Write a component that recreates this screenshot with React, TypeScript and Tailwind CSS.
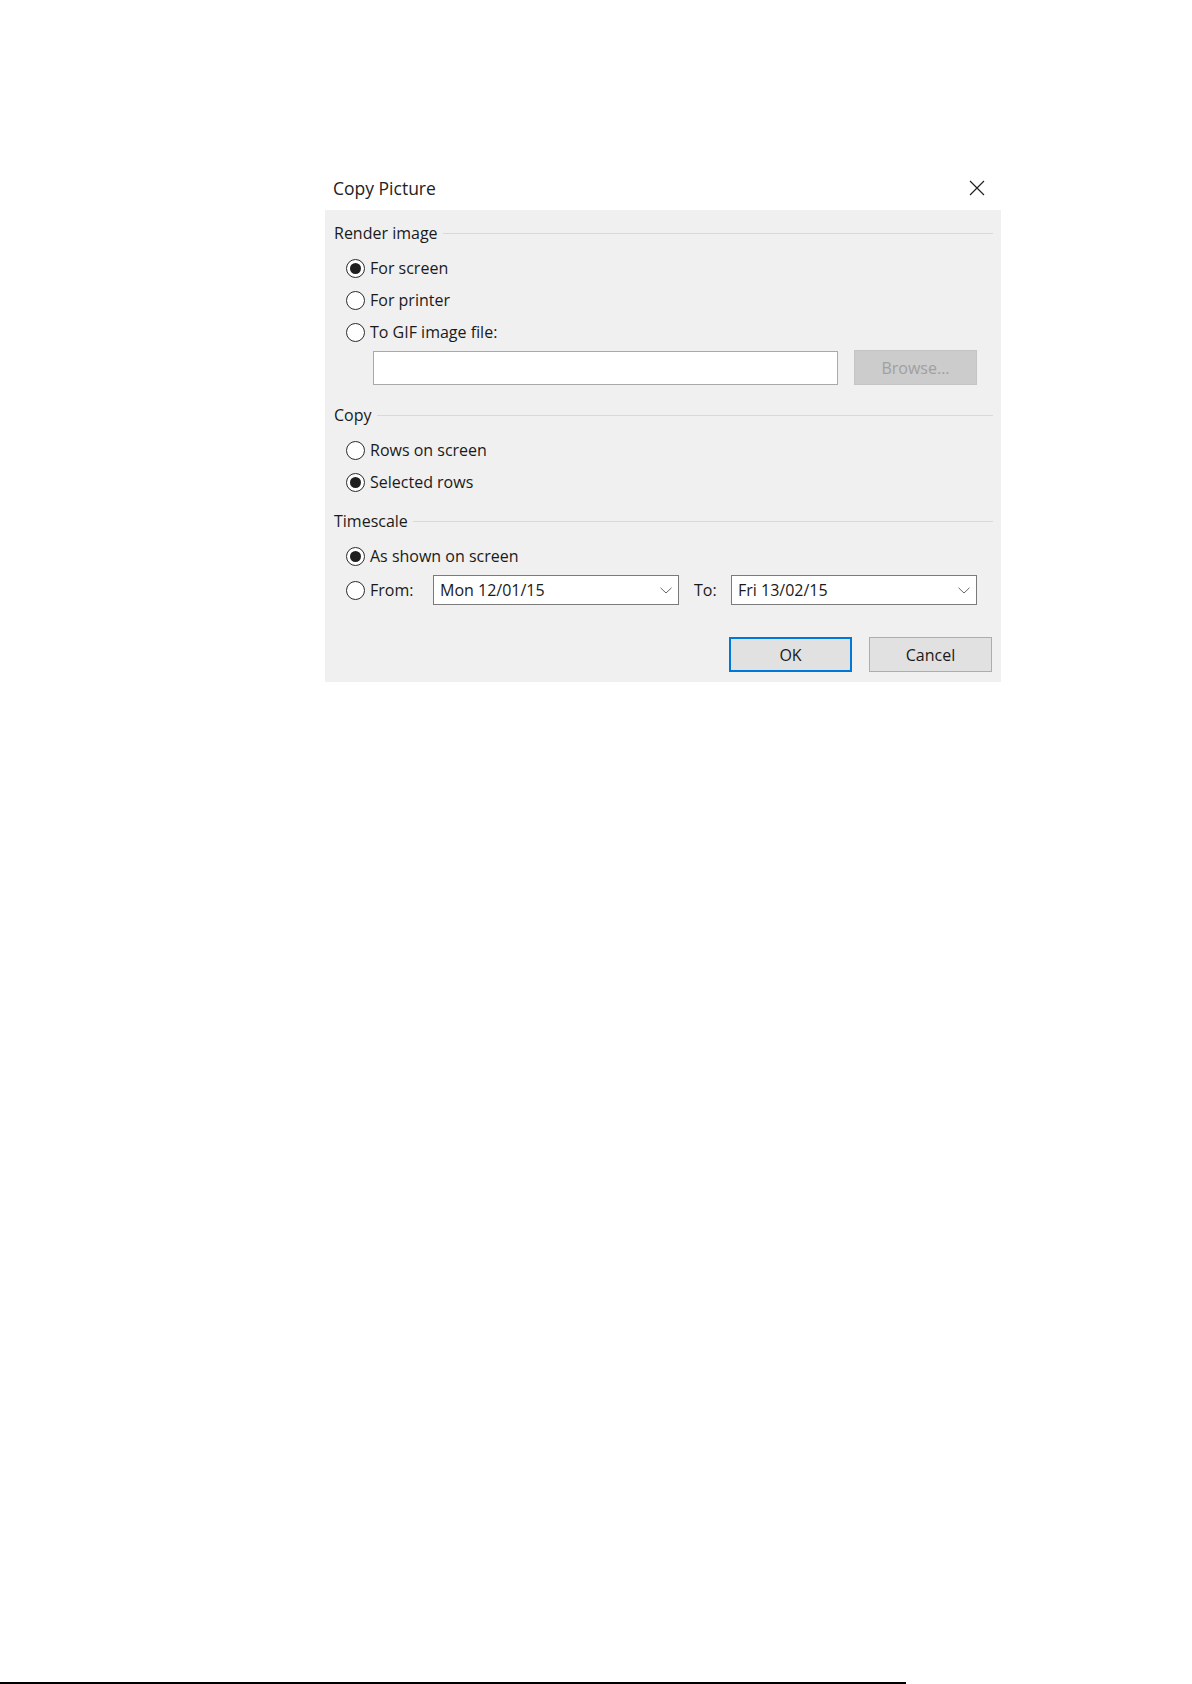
import React from "react";

const font = { fontFamily: '"Open Sans", "Noto Sans", sans-serif' };

function Circle({ checked }: { checked?: boolean }) {
  return (
    <span className="flex h-[19px] w-[19px] shrink-0 items-center justify-center rounded-full border border-[#2b2b2b] bg-white">
      {checked && <span className="h-[11px] w-[11px] rounded-full bg-[#1f1f1f]" />}
    </span>
  );
}

function Radio({ checked, label }: { checked?: boolean; label: string }) {
  return (
    <div className="flex h-[32px] items-center">
      <Circle checked={checked} />
      <span className="ml-[5px] text-[16px] leading-[22px] text-[#1a1a1a]">{label}</span>
    </div>
  );
}

function Header({ label }: { label: string }) {
  return (
    <div className="flex h-[22px] items-center pl-[9px] pr-[8px]">
      <span className="text-[16px] leading-[22px] text-[#1a1a1a]">{label}</span>
      <span className="ml-[5px] h-px flex-1 bg-[#d9d9d9]" />
    </div>
  );
}

function Chevron() {
  return (
    <svg width="12" height="7" viewBox="0 0 12 7" fill="none">
      <path d="M0.5 0.8 L6 6 L11.5 0.8" stroke="#666666" strokeWidth="1" />
    </svg>
  );
}

function Select({ value }: { value: string }) {
  return (
    <div className="flex h-[30px] w-[246px] items-center justify-between border border-[#7a7a7a] bg-white pl-[6px] pr-[6px]">
      <span className="text-[16px] leading-[22px] text-[#1a1a1a]">{value}</span>
      <Chevron />
    </div>
  );
}

export default function App() {
  return (
    <div className="relative h-[1684px] w-[1192px] overflow-hidden bg-white" style={font}>
      <div className="pl-[325px] pt-[165px]">
        <div className="w-[676px]">
          <div className="flex h-[45px] items-center justify-between pl-[8px] pr-[16px]">
            <span className="text-[17.5px] leading-[24px] text-[#222222]">Copy Picture</span>
            <svg width="16" height="16" viewBox="0 0 16 16">
              <path d="M1 1 L15 15 M15 1 L1 15" stroke="#222222" strokeWidth="1.2" />
            </svg>
          </div>
          <div className="h-[472px] bg-[#f0f0f0] pt-[12px]">
            <Header label="Render image" />
            <div className="mt-[8px] pl-[21px]">
              <Radio checked label="For screen" />
              <Radio label="For printer" />
              <Radio label="To GIF image file:" />
            </div>
            <div className="mt-[2px] flex items-center pl-[48px]">
              <div className="h-[34px] w-[465px] border border-[#a9a9a9] bg-white" />
              <div className="ml-[16px] flex h-[35px] w-[123px] items-center justify-center border border-[#c4c4c4] bg-[#cccccc] text-[16px] text-[#a0a0a0]">
                Browse...
              </div>
            </div>
            <div className="mt-[19px]">
              <Header label="Copy" />
            </div>
            <div className="mt-[8px] pl-[21px]">
              <Radio label="Rows on screen" />
              <Radio checked label="Selected rows" />
            </div>
            <div className="mt-[12px]">
              <Header label="Timescale" />
            </div>
            <div className="mt-[8px] pl-[21px]">
              <Radio checked label="As shown on screen" />
            </div>
            <div className="mt-[3px] flex h-[30px] items-center pl-[21px]">
              <Circle />
              <span className="ml-[5px] w-[63px] text-[16px] leading-[22px] text-[#1a1a1a]">From:</span>
              <Select value="Mon 12/01/15" />
              <span className="ml-[15px] w-[37px] text-[16px] leading-[22px] text-[#1a1a1a]">To:</span>
              <Select value="Fri 13/02/15" />
            </div>
            <div className="mt-[32px] flex justify-end gap-[17px] pr-[9px]">
              <div className="flex h-[35px] w-[123px] items-center justify-center border-2 border-[#0078d7] bg-[#e1e1e1] text-[16px] text-[#1a1a1a]">
                OK
              </div>
              <div className="flex h-[35px] w-[123px] items-center justify-center border border-[#adadad] bg-[#e1e1e1] text-[16px] text-[#1a1a1a]">
                Cancel
              </div>
            </div>
          </div>
        </div>
      </div>
      <div className="absolute bottom-0 left-0 h-[2px] w-[906px] bg-black" />
    </div>
  );
}
